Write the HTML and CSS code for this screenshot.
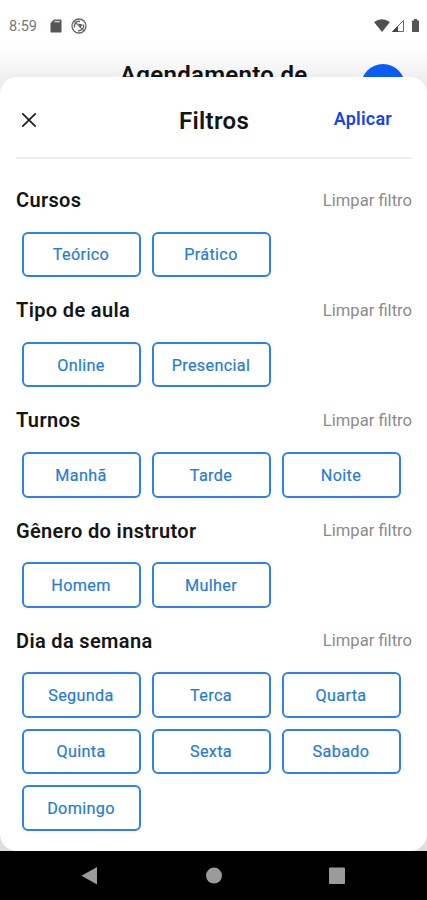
FILE: index.html
```
<!DOCTYPE html>
<html lang="pt-BR">
<head>
<meta charset="utf-8">
<title>Filtros</title>
<link rel="stylesheet" href="styles.css">
</head>
<body>
<div class="phone">
  <div class="backdrop">
    <div class="status">
      <span class="time">8:59</span>
      <svg class="sd" width="12" height="14" viewBox="0 0 12 14"><path d="M4 .5h6.500q1 0 1 1v11q0 1-1 1h-9q-1 0-1-1V4z" fill="#555"/><path d="M4.300 2.600h5.500" stroke="#ccc" stroke-width="1.500"/></svg>
      <svg class="sync" width="16" height="16" viewBox="0 0 16 16" fill="none" stroke="#666"><circle cx="8" cy="8" r="7" stroke-width="1.300"/><path d="M3.600 9.500A4.600 4.600 0 0 1 9 3.500M12.400 6.500A4.600 4.600 0 0 1 7 12.500" stroke-width="1.500"/><path d="M2.800 2.800l10.400 10.400" stroke-width="1.200"/><path d="M7 5.500l4.500 1-2 3z" fill="#555" stroke="none"/></svg>
      <svg class="signals" width="46" height="14" viewBox="0 0 46 14"><path d="M0 3Q8 -2.400 16 3L8 13z" fill="#505050"/><path d="M29.500 1.500v11h-11z" fill="#fff" stroke="#666"/><path d="M24 7v6h-6z" fill="#444"/><path d="M38 1.500h2V0h3v1.500h2V13h-7z" fill="#555"/></svg>
    </div>
    <div class="page-head"><span class="page-title">Agendamento de</span><span class="avatar"></span></div>
  </div>
  <main class="sheet">
    <header class="head">
      <svg class="close" width="16" height="16" viewBox="0 0 16 16"><path d="M1.300 1.300l13.400 13.400M14.700 1.300L1.300 14.700" stroke="#1c1c1c" stroke-width="1.700"/></svg>
      <h1>Filtros</h1>
      <span class="apply">Aplicar</span>
    </header>
    <section><div class="row"><h2>Cursos</h2><span class="clear">Limpar filtro</span></div>
      <div class="chips"><button>Teórico</button><button>Prático</button></div></section>
    <section><div class="row"><h2>Tipo de aula</h2><span class="clear">Limpar filtro</span></div>
      <div class="chips"><button>Online</button><button>Presencial</button></div></section>
    <section><div class="row"><h2>Turnos</h2><span class="clear">Limpar filtro</span></div>
      <div class="chips"><button>Manhã</button><button>Tarde</button><button>Noite</button></div></section>
    <section><div class="row"><h2>Gênero do instrutor</h2><span class="clear">Limpar filtro</span></div>
      <div class="chips"><button>Homem</button><button>Mulher</button></div></section>
    <section><div class="row"><h2>Dia da semana</h2><span class="clear">Limpar filtro</span></div>
      <div class="chips"><button>Segunda</button><button>Terca</button><button>Quarta</button><button>Quinta</button><button>Sexta</button><button>Sabado</button><button>Domingo</button></div></section>
  </main>
  <nav class="nav">
    <svg width="427" height="49" viewBox="0 0 427 49" fill="#9b9b9b"><path d="M97 16v17.500L81.500 24.700z"/><circle cx="214" cy="24.600" r="8"/><rect x="329" y="16.500" width="16" height="16.500" rx="1"/></svg>
  </nav>
</div>
</body>
</html>
```
FILE: styles.css
```
* { box-sizing: border-box; }
body { margin: 0; font-family: Roboto, sans-serif; background: #fff; }
.phone { width: 427px; height: 900px; display: flex; flex-direction: column; overflow: hidden; background: #dedede; }
.backdrop { height: 93px; flex: none; background: linear-gradient(#fff 0, #fff 45px, #f8f8f8 64px, #efefef 77px, #ebebeb); }
.status { display: flex; align-items: center; height: 52px; padding: 0 7px 0 9px; color: #777; }
.time { font-size: 14.5px; width: 41px; }
.sync { margin-left: 9px; }
.signals { margin-left: auto; }
.page-head { display: flex; height: 41px; padding-left: 120px; }
.page-title { width: 241px; font-size: 24px; line-height: 28px; font-weight: 600; letter-spacing: .3px; color: #111; padding-top: 9px; white-space: nowrap; }
.avatar { width: 44px; height: 44px; margin-top: 12px; border-radius: 50%; background: #0b5cf5; flex: none; }
.sheet { position: relative; flex: none; height: 774px; margin-top: -16px; padding: 0 15px 0 16px; background: #fff; border-radius: 17px; }
.head { display: grid; grid-template-columns: 1fr auto 1fr; align-items: center; height: 82px; border-bottom: 2px solid #eee; padding: 5px 5px 0 5px; margin-bottom: 24px; }
h1, h2 { margin: 0; font-weight: 600; color: #151515; }
h1 { font-size: 24px; line-height: 30px; letter-spacing: .3px; padding-top: 2px; }
.apply { justify-self: end; font-size: 18px; font-weight: 600; color: #1746e8; letter-spacing: .2px; margin: -3px 15px 0 0; }
section { height: 110.200px; }
.row { display: flex; justify-content: space-between; align-items: center; height: 34px; }
h2 { font-size: 20px; letter-spacing: .35px; }
.clear { font-size: 16.600px; color: #8b8b8b; }
.chips { display: grid; grid-template-columns: repeat(3, 119px); gap: 10.600px 11px; padding: 14.500px 0 0 5.500px; }
.chips button { height: 45.700px; padding: 1px 0 0; border: 2px solid #2b82ec; border-radius: 6px; background: #fff; color: #287bd4; font: 400 16.200px Roboto, sans-serif; letter-spacing: .35px; -webkit-text-stroke: .2px #287bd4; }
.nav { height: 49px; background: #000; flex: none; }
.nav svg { display: block; }
```
